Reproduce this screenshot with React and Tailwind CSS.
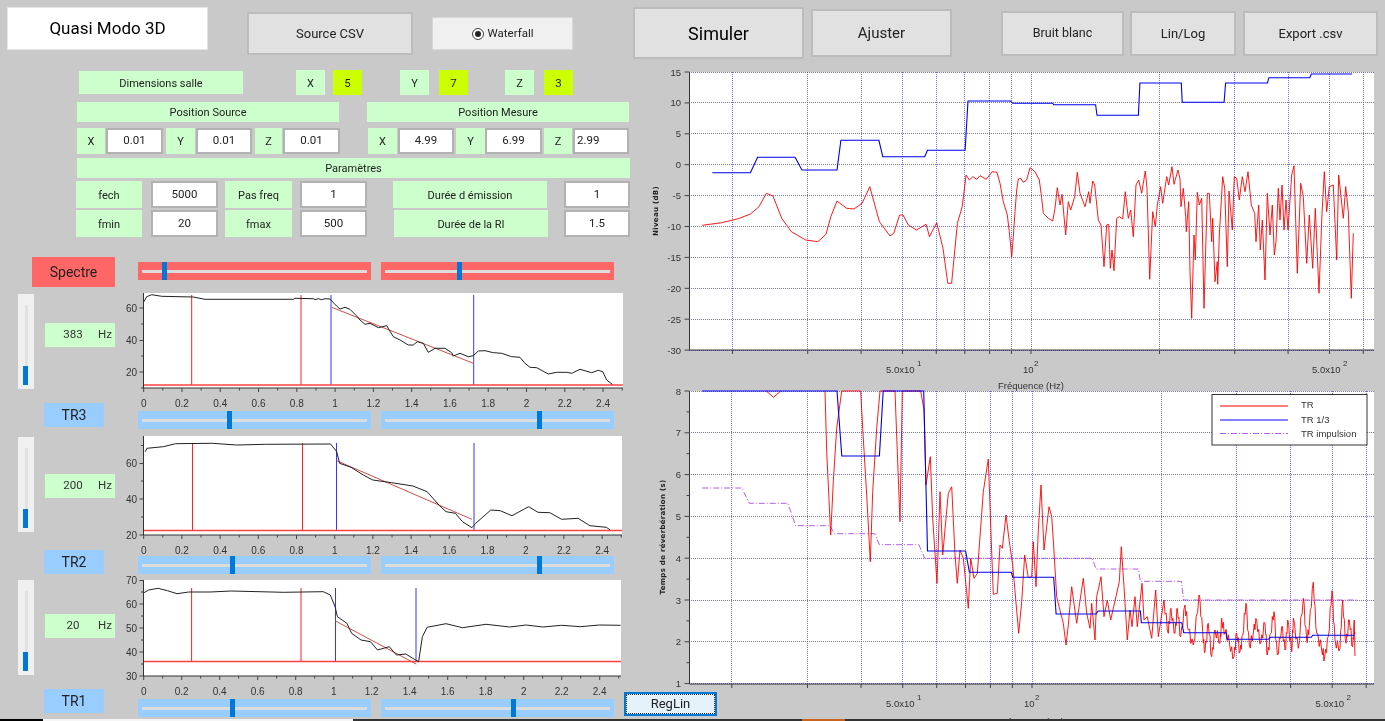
import React from "react";

const FONT = 'Roboto,"Noto Sans","Liberation Sans",sans-serif';
const PLOT_FONT = '"Liberation Sans",Arial,sans-serif';

/* ---------- curve data (traced, converted to page coordinates) ---------- */
const conv = (pts, fx, fy, ox, oy) => pts.map(([x, y]) => [ox + x / fx, oy + y / fy]);
const toStr = (pts) => pts.map(([x, y]) => `${x.toFixed(1)},${y.toFixed(1)}`).join(" ");

const z4 = (p) => conv(p, 2.077, 3, 630, 0);
const z5 = (p) => conv(p, 2.077, 3, 630, 380);
const z6 = (p) => conv(p, 3, 3, 1000, 155);
const z7 = (p) => conv(p, 3, 3, 1180, 155);
const z8 = (p) => conv(p, 3, 3, 820, 385);
const z9 = (p) => conv(p, 3, 3, 1020, 520);
const z2 = (p) => conv(p, 2.45, 3, 0, 250);
const z3 = (p) => conv(p, 2.119, 3, 0, 480);
const z11 = (p) => conv(p, 3, 3, 130, 290);

/* adds a fixed wiggle between traced points, for the noisy part of the curve */
const densify = (pts, amp) => {
  const out = [];
  const w = [1, -0.6, 0.8, -1, 0.5, -0.8, 1, -0.4];
  pts.forEach((p, i) => {
    out.push(p);
    const n = pts[i + 1];
    if (n) {
      [0.25, 0.5, 0.75].forEach((t, j) => {
        out.push([p[0] + (n[0] - p[0]) * t, p[1] + (n[1] - p[1]) * t + amp * w[(i * 3 + j) % 8]]);
      });
    }
  });
  return out;
};

const topBlue = z4([[171,518],[250,518],[265,472],[343,472],[357,510],[430,510],[438,421],[517,421],[525,470],[612,470],[618,451],[696,451],[702,303],[790,303],[795,310],[878,310],[880,314],[967,314],[970,346],[1056,346],[1059,249],[1145,249],[1147,307],[1234,307],[1237,249],[1324,249],[1327,233],[1412,233],[1415,222],[1500,222]]);
const topRed = [
  ...z4([[150,676],[190,668],[225,656],[250,642],[268,620],[283,580],[297,588],[315,655],[335,695],[365,720],[390,725],[407,703],[417,650],[430,603],[450,625],[465,627],[482,610],[498,560],[518,665],[540,708],[548,700],[560,645],[567,645],[578,675],[595,690],[615,673],[622,710],[637,668],[650,745],[660,850],[668,850],[680,670],[690,620],[698,525],[705,540],[712,530],[720,538],[727,527],[740,538],[752,515],[762,517]]),
  ...z6([[0,85],[10,140],[22,180],[28,230],[35,305],[40,245],[45,170],[50,105],[55,72],[62,70],[70,82],[80,75],[90,38],[105,50],[118,75],[125,130],[130,175],[145,190],[158,198],[165,160],[172,98],[180,150],[186,118],[197,240],[205,140],[212,165],[224,125],[232,52],[240,115],[255,155],[266,110],[270,145],[278,78],[284,90],[295,195],[303,210],[312,335],[320,210],[326,208],[331,340],[336,285],[342,347],[350,190],[358,185],[368,192],[376,110],[385,190],[392,165],[400,245],[408,90],[416,75],[425,115],[436,48],[441,100],[449,373],[458,170],[466,215],[472,150],[482,95],[488,145],[500,65],[506,90],[516,35],[522,88],[534,45]]),
  ...z7([[0,72],[3,155],[10,100],[17,185],[19,230],[26,140],[30,350],[35,490],[42,240],[46,315],[52,112],[58,150],[65,130],[72,460],[82,115],[88,115],[95,260],[98,190],[105,380],[112,320],[113,388],[118,240],[128,65],[134,100],[142,335],[147,108],[157,225],[163,65],[170,70],[178,135],[187,65],[195,110],[204,50],[214,150],[224,175],[228,260],[236,150],[241,285],[247,195],[255,375],[262,115],[270,240],[277,150],[283,300],[288,260],[295,100],[300,195],[306,90],[312,225],[318,135],[324,225],[330,135],[335,60],[342,32],[352,355],[362,85],[370,125],[380,325],[388,180],[398,340],[406,160],[417,415],[426,175],[433,50],[440,170],[448,95],[460,90],[470,315],[476,60],[490,190],[497,95],[505,170],[514,430],[520,235]]),
];

const botBlue = z5([[150,33],[430,33],[440,228],[518,228],[526,33],[610,33],[618,513],[697,513],[705,577],[792,577],[795,592],[880,592],[885,702],[968,702],[972,693],[1060,693],[1062,728],[1146,728],[1150,758],[1238,758],[1240,778],[1326,778],[1330,772],[1415,772],[1418,766],[1505,766]]);
const botPurple = z5([[150,324],[232,324],[248,370],[328,370],[344,437],[415,437],[425,461],[508,461],[518,494],[600,494],[612,535],[960,535],[968,567],[1056,567],[1060,604],[1145,604],[1150,660],[1510,660]]);
const botRedV = z5([[283,33],[298,52],[313,33]]);
const botRed = [
  ...z8([[15,18],[20,200],[32,450],[40,290],[50,130],[65,18],[122,18],[128,130],[140,330],[151,530],[158,320],[170,130],[180,18],[225,18],[232,200],[240,410],[247,18],[302,18],[312,75],[318,300],[331,215],[338,400],[351,595],[360,320],[368,510],[378,400],[385,325],[395,305],[405,510],[412,595],[420,495],[430,520],[445,670],[452,520],[462,580],[472,565],[490,320],[505,222],[514,470],[520,628],[532,625],[540,480],[547,490],[558,390],[568,470],[578,540],[596,745],[605,650],[614,510],[625,578],[635,575],[640,470],[648,605],[655,435]]),
  ...z9([[63,-105],[72,90],[87,-40],[95,-10],[100,60],[110,230],[122,280],[130,310],[138,375],[145,315],[155,200],[170,310],[190,175],[200,280],[210,325],[215,250],[225,360],[230,230],[243,170],[252,290],[262,240],[272,300],[298,185],[304,80],[312,200],[322,360],[330,270],[336,320],[345,230],[352,320],[366,190],[372,300],[382,290],[395,355],[407,210],[415,350]]),
  ...densify(z9([[432,240],[445,340],[453,265],[465,340],[472,265],[482,350],[495,255],[505,330],[520,375],[537,225],[548,335],[555,395],[565,310],[575,410],[585,330],[600,370],[605,295],[615,340],[628,365],[642,410],[650,340],[660,395],[668,345],[678,250],[688,375],[700,340],[710,300],[722,370],[735,310],[742,405],[752,340],[762,275],[772,405],[785,320],[795,390],[803,300],[815,395],[820,295],[835,385],[850,235],[860,360],[868,320],[880,187],[890,340],[905,390],[914,410],[925,350],[936,212],[945,360],[960,385],[968,240],[978,370],[988,300],[998,380],[1003,300],[1005,408]]), 6),
];

const ch1 = {
  curve: z11([[42,35],[50,20],[65,14],[95,19],[190,21],[225,28],[490,28],[495,25],[550,26],[555,29],[565,26],[575,29],[585,26],[600,27],[612,40],[622,50],[630,57],[645,52],[660,58],[680,78],[690,90],[705,103],[720,100],[745,113],[770,107],[790,140],[810,150],[835,165],[850,165],[862,155],[880,160],[895,187],[915,175],[945,175],[965,188],[970,198],[990,190],[1015,200],[1030,197],[1045,183],[1065,182],[1090,188],[1115,190],[1145,200],[1170,202],[1185,220],[1200,232],[1220,233],[1255,252],[1280,247],[1310,247],[1325,250],[1350,238],[1385,248],[1405,241],[1418,245],[1430,270],[1447,283]]),
  reg: z11([[605,52],[1030,220]]),
};
const ch2 = {
  curve: [
    ...z2([[356,605],[360,595],[400,590],[430,581],[520,580],[580,585],[650,583],[810,582],[825,605],[832,640],[860,652],[890,675]]),
    ...z3([[790,0],[830,8],[875,18],[905,35],[930,75],[945,95],[965,100],[980,125],[1000,143],[1008,130],[1040,90],[1060,92],[1085,107],[1120,80],[1140,97],[1165,98],[1190,118],[1225,115],[1250,137],[1285,142],[1293,150]]),
  ],
  reg: [...z2([[825,632]]), ...z3([[1000,118]])],
};
const ch3 = {
  curve: z3([[305,338],[315,330],[335,325],[355,332],[375,341],[400,336],[445,336],[490,333],[600,337],[685,335],[700,345],[710,380],[715,410],[735,430],[745,460],[765,480],[785,485],[800,510],[825,500],[840,525],[860,522],[878,538],[887,545],[895,470],[905,442],[945,431],[980,443],[1030,433],[1080,441],[1115,435],[1150,441],[1190,436],[1230,440],[1270,435],[1315,436]]),
  reg: z3([[711,423],[882,552]]),
};

/* ---------- small pieces ---------- */
const Cell = ({ c, children }) => (
  <div className={"flex shrink-0 items-center justify-center whitespace-nowrap text-[#222] " + c}>{children}</div>
);
const Green = ({ c, children }) => <Cell c={"bg-[#ccffcc] pt-[3px] text-[11px] " + c}>{children}</Cell>;
const Field = ({ c, children }) => (
  <Cell c={"border-2 border-[#b2b2b2] bg-white text-[11.5px] " + c}>{children}</Cell>
);
const Btn = ({ c, children }) => (
  <Cell c={"border-2 border-[#bcbcbc] bg-[#e1e1e1] " + c}>{children}</Cell>
);

const HSlider = ({ c, thumb }) => (
  <div className={"relative flex h-[18px] w-[233px] shrink-0 items-center px-[4px] " + c}>
    <div className="h-[3px] w-full bg-[#dcdcdc]" />
    <div className={"absolute top-0 h-full w-[5px] bg-[#0078d7] " + thumb} />
  </div>
);

const VSlider = ({ c }) => (
  <div className={"relative flex h-[95px] w-[16px] shrink-0 justify-center bg-[#f0f0f0] pt-[11px] " + c}>
    <div className="h-[79px] w-[3px] bg-[#e2e2e2]" />
    <div className="absolute left-[5px] top-[72px] h-[19px] w-[5px] bg-[#0078d7]" />
  </div>
);

const XLABELS = ["0", "0.2", "0.4", "0.6", "0.8", "1", "1.2", "1.4", "1.6", "1.8", "2", "2.2", "2.4"];

const SmallPlot = ({ top, bottom, right, scale, yTicks, minors, data, red, blue, vTop, hline, h }) => {
  const x = (v) => 143.7 + v * scale;
  const ticks = Array.from({ length: 26 }, (_, i) => i / 10);
  return (
    <svg
      className="shrink-0 overflow-visible"
      width="509"
      height={h}
      viewBox={`115 ${top} 509 ${h}`}
      fontFamily={PLOT_FONT}
    >
      <rect x="144" y={top} width={right - 144} height={bottom - top} fill="#fff" />
      <polyline points={`143.5,${top} 143.5,${bottom} ${right},${bottom}`} fill="none" stroke="#333" strokeWidth="1" />
      {ticks.map((t, i) => (
        <line key={i} x1={x(t)} x2={x(t)} y1={bottom} y2={bottom + (i % 2 ? 2.5 : 4)} stroke="#444" strokeWidth="1" />
      ))}
      {XLABELS.map((l, i) => (
        <text key={l} x={x(i * 0.2)} y={bottom + 18.5} fontSize="10" fill="#333" textAnchor="middle">{l}</text>
      ))}
      {yTicks.map(([label, y]) => (
        <g key={label}>
          <line x1="139.5" x2="143.5" y1={y} y2={y} stroke="#444" />
          <text x="137" y={y + 3.5} fontSize="10" fill="#333" textAnchor="end">{label}</text>
        </g>
      ))}
      {minors.map((y) => (
        <line key={y} x1="141" x2="143.5" y1={y} y2={y} stroke="#444" />
      ))}
      {red.map((v) => (
        <line key={v} x1={v} x2={v} y1={vTop} y2={hline} stroke="#ff2020" strokeWidth="1" />
      ))}
      {blue.map((v) => (
        <line key={v} x1={v} x2={v} y1={vTop} y2={hline} stroke="#3535ff" strokeWidth="1" />
      ))}
      <line x1="144" x2={right} y1={hline} y2={hline} stroke="#ff4040" strokeWidth="1.3" />
      <polyline points={toStr(data.reg)} fill="none" stroke="#c8504a" strokeWidth="1" />
      <polyline points={toStr(data.curve)} fill="none" stroke="#222" strokeWidth="1" strokeLinejoin="round" />
    </svg>
  );
};

const Freq = [20, 30, 40, 50, 60, 70, 80, 90, 100, 200, 300, 400, 500, 600];
const snap = (v) => Math.floor(v) + 0.5;

const Grid = ({ fx, ys, top, bottom }) => (
  <g stroke="#4040ff" strokeOpacity="0.75" strokeWidth="1" strokeDasharray="1 1">
    {Freq.map((f) => (
      <line key={f} x1={snap(fx(f))} x2={snap(fx(f))} y1={top} y2={bottom} />
    ))}
    {ys.map(([, y]) => (
      <line key={y} x1="689" x2="1374" y1={snap(y)} y2={snap(y)} />
    ))}
  </g>
);

const AxisFrame = ({ fx, ys, bottom, top, labels, minors }) => (
  <g fontFamily={PLOT_FONT} fontSize="9.5" fill="#333">
    <polyline points={`689.5,${top} 689.5,${bottom} 1374,${bottom}`} fill="none" stroke="#333" strokeWidth="1" />
    {Freq.map((f) => (
      <line key={f} x1={fx(f)} x2={fx(f)} y1={bottom} y2={bottom + 4} stroke="#444" />
    ))}
    {ys.map(([l, y]) => (
      <g key={l}>
        <line x1="684.5" x2="689.5" y1={y} y2={y} stroke="#444" />
        <text x="681" y={y + 3.5} textAnchor="end">{l}</text>
      </g>
    ))}
    {(minors || []).map((y) => (
      <line key={y} x1="686.5" x2="689.5" y1={y} y2={y} stroke="#444" />
    ))}
    {labels.map(([x, base, sup]) => (
      <g key={base + sup + x}>
        <text x={x} y={bottom + 22.5}>{base}</text>
        <text x={x + (base.length > 2 ? 31 : 11)} y={bottom + 16} fontSize="8">{sup}</text>
      </g>
    ))}
  </g>
);

const topX = (f) => 1031 + 427 * Math.log10(f / 100);
const botX = (f) => 1032 + 429.5 * Math.log10(f / 100);
const topYs = [15, 10, 5, 0, -5, -10, -15, -20, -25, -30].map((v, i) => [String(v), 72 + i * 30.9]);
const botYs = [8, 7, 6, 5, 4, 3, 2, 1].map((v, i) => [String(v), 391 + i * 41.8]);
const botMinors = [0, 1, 2, 3, 4, 5, 6].map((i) => 391 + (i + 0.5) * 41.8);

const TopChart = () => (
  <svg className="block shrink-0 overflow-visible" width="761" height="322" viewBox="624 65 761 322">
    <rect x="689" y="72" width="685" height="278" fill="#fff" />
    <Grid fx={topX} ys={topYs} top={72} bottom={350} />
    <polyline points={toStr(topRed)} fill="none" stroke="#ff0000" strokeWidth="0.9" strokeLinejoin="round" />
    <polyline points={toStr(topBlue)} fill="none" stroke="#0000ee" strokeWidth="1.1" />
    <AxisFrame
      fx={topX}
      ys={topYs}
      top={72}
      bottom={350}
      labels={[[886, "5.0x10", "1"], [1023, "10", "2"], [1312, "5.0x10", "2"]]}
    />
    <text
      transform="translate(658 211) rotate(-90)"
      textAnchor="middle"
      fontFamily="'DejaVu Sans',sans-serif"
      fontWeight="700"
      fontSize="7"
      letterSpacing="0.3"
      fill="#222"
    >
      Niveau (dB)
    </text>
    <text x="1031" y="389" textAnchor="middle" fontFamily={PLOT_FONT} fontSize="9.5" fill="#333">Fréquence (Hz)</text>
  </svg>
);

const BottomChart = () => (
  <svg className="block shrink-0" width="761" height="334" viewBox="624 387 761 334">
    <rect x="689" y="391" width="685" height="293" fill="#fff" />
    <Grid fx={botX} ys={botYs} top={391} bottom={684} />
    <polyline points={toStr(botPurple)} fill="none" stroke="#b45cf0" strokeWidth="1" strokeDasharray="6 2 1 2" />
    <polyline points={toStr(botRedV)} fill="none" stroke="#ff0000" strokeWidth="0.9" />
    <polyline points={toStr(botRed)} fill="none" stroke="#ff0000" strokeWidth="0.9" strokeLinejoin="round" />
    <polyline points={toStr(botBlue)} fill="none" stroke="#0000ee" strokeWidth="1.1" />
    <AxisFrame
      fx={botX}
      ys={botYs}
      top={391}
      bottom={684}
      minors={botMinors}
      labels={[[886, "5.0x10", "1"], [1024, "10", "2"], [1315.5, "5.0x10", "2"]]}
    />
    <text
      transform="translate(665 537) rotate(-90)"
      textAnchor="middle"
      fontFamily="'DejaVu Sans',sans-serif"
      fontWeight="700"
      fontSize="7"
      letterSpacing="0.3"
      fill="#222"
    >
      Temps de réverbération (s)
    </text>
    <text x="1031" y="725" textAnchor="middle" fontFamily={PLOT_FONT} fontSize="9.5" fill="#333">Fréquence (Hz)</text>
    <g fontFamily={PLOT_FONT} fontSize="9.5" fill="#333">
      <rect x="1212" y="394.5" width="155" height="50.5" fill="#fff" stroke="#333" strokeWidth="1" />
      <line x1="1220" x2="1288" y1="406" y2="406" stroke="#ff0000" strokeWidth="1.1" />
      <line x1="1220" x2="1288" y1="420" y2="420" stroke="#5a5aff" strokeWidth="1.6" />
      <line x1="1220" x2="1288" y1="433.5" y2="433.5" stroke="#b45cf0" strokeWidth="1" strokeDasharray="6 2 1 2" />
      <text x="1301" y="408">TR</text>
      <text x="1301" y="422.5">TR 1/3</text>
      <text x="1301" y="437">TR impulsion</text>
    </g>
  </svg>
);

const HzLabel = ({ c, value }) => (
  <div className={"flex h-[24px] w-[70px] shrink-0 items-center bg-[#ccffcc] pl-[10px] text-[11.5px] text-[#333] " + c}>
    <span className="w-[36px] text-center">{value}</span>
    <span className="ml-[7px]">Hz</span>
  </div>
);

const Blue = ({ children }) => (
  <Cell c="h-[24px] w-[60px] bg-[#99ccff] text-[14px] ml-[44px]">{children}</Cell>
);

export default function App() {
  return (
    <div
      className="relative flex h-[721px] w-[1385px] flex-col overflow-hidden bg-[#c9c9c9] blur-[0.45px]"
      style={{ fontFamily: FONT }}
    >
      {/* top buttons */}
      <div className="flex h-[65px] shrink-0 items-start">
        <Cell c="ml-[7px] mt-[7px] h-[43px] w-[201px] border border-[#e4e4e4] bg-white text-[17px] text-black">Quasi Modo 3D</Cell>
        <Btn c="ml-[39px] mt-[12px] h-[43px] w-[166px] text-[13px]">Source CSV</Btn>
        <Cell c="ml-[19px] mt-[17px] h-[33px] w-[141px] gap-[4px] border border-[#d8d8d8] bg-[#f0f0f0] text-[11.5px]">
          <span className="flex h-[12px] w-[12px] items-center justify-center rounded-full border border-[#444] bg-white">
            <span className="h-[6px] w-[6px] rounded-full bg-[#222]" />
          </span>
          Waterfall
        </Cell>
        <Btn c="ml-[60px] mt-[7px] h-[52px] w-[171px] text-[18px] text-black">Simuler</Btn>
        <Btn c="ml-[7px] mt-[9px] h-[48px] w-[141px] text-[15px]">Ajuster</Btn>
        <Btn c="ml-[49px] mt-[11px] h-[45px] w-[123px] text-[12.5px]">Bruit blanc</Btn>
        <Btn c="ml-[6px] mt-[11px] h-[45px] w-[106px] text-[13px]">Lin/Log</Btn>
        <Btn c="ml-[7px] mt-[11px] h-[45px] w-[135px] text-[13px]">Export .csv</Btn>
      </div>

      <div className="flex min-h-0 flex-1">
        {/* left column */}
        <div className="flex w-[624px] shrink-0 flex-col">
          <div className="mt-[5px] flex h-[25px] items-center">
            <Green c="ml-[79px] h-[23px] w-[164px] text-[10.5px]">Dimensions salle</Green>
            <Green c="ml-[53px] h-[25px] w-[29px]">X</Green>
            <Cell c="ml-[8px] h-[25px] w-[29px] bg-[#ccff00] pt-[3px] text-[11.5px]">5</Cell>
            <Green c="ml-[38px] h-[25px] w-[29px]">Y</Green>
            <Cell c="ml-[10px] h-[25px] w-[29px] bg-[#ccff00] pt-[3px] text-[11.5px]">7</Cell>
            <Green c="ml-[37px] h-[25px] w-[29px]">Z</Green>
            <Cell c="ml-[10px] h-[25px] w-[29px] bg-[#ccff00] pt-[3px] text-[11.5px]">3</Cell>
          </div>

          <div className="mt-[7px] flex h-[20px]">
            <Green c="ml-[77px] w-[262px]">Position Source</Green>
            <Green c="ml-[28px] w-[262px]">Position Mesure</Green>
          </div>

          <div className="mt-[6px] flex h-[26px]">
            <Green c="ml-[77px] w-[28px]">X</Green>
            <Field c="ml-[1px] w-[57px]">0.01</Field>
            <Green c="ml-[3px] w-[29px]">Y</Green>
            <Field c="ml-[1px] w-[56px]">0.01</Field>
            <Green c="ml-[3px] w-[27px]">Z</Green>
            <Field c="ml-[1px] w-[57px]">0.01</Field>
            <Green c="ml-[28px] w-[29px]">X</Green>
            <Field c="ml-[1px] w-[56px]">4.99</Field>
            <Green c="ml-[2px] w-[29px]">Y</Green>
            <Field c="ml-[0px] w-[57px]">6.99</Field>
            <Green c="ml-[2px] w-[28px]">Z</Green>
            <Field c="ml-[1px] w-[56px] justify-start pl-[2px]">2.99</Field>
          </div>

          <div className="mt-[4px] flex h-[20px]">
            <Green c="ml-[77px] w-[553px]">Paramètres</Green>
          </div>

          <div className="mt-[3px] flex h-[27px]">
            <Green c="ml-[76px] w-[66px]">fech</Green>
            <Field c="ml-[9px] w-[67px]">5000</Field>
            <Green c="ml-[7px] w-[67px]">Pas freq</Green>
            <Field c="ml-[8px] w-[67px]">1</Field>
            <Green c="ml-[26px] w-[154px]">Durée d émission</Green>
            <Field c="ml-[17px] w-[66px]">1</Field>
          </div>

          <div className="mt-[2px] flex h-[27px]">
            <Green c="ml-[76px] w-[66px]">fmin</Green>
            <Field c="ml-[9px] w-[67px]">20</Field>
            <Green c="ml-[7px] w-[67px]">fmax</Green>
            <Field c="ml-[8px] w-[67px]">500</Field>
            <Green c="ml-[27px] w-[154px]">Durée de la RI</Green>
            <Field c="ml-[16px] w-[66px]">1.5</Field>
          </div>

          {/* Spectre */}
          <div className="mt-[20px] flex h-[30px] items-start">
            <Cell c="ml-[32px] h-[30px] w-[83px] bg-[#ff6666] text-[14px]">Spectre</Cell>
            <HSlider c="ml-[23px] mt-[5px] bg-[#ff6666]" thumb="left-[24px]" />
            <HSlider c="ml-[10px] mt-[5px] bg-[#ff6666]" thumb="left-[76px]" />
          </div>

          {/* channel 3 */}
          <div className="mt-[6px] flex h-[110px] items-start">
            <VSlider c="ml-[18px] mt-[1px]" />
            <HzLabel c="ml-[11px] mt-[30px]" value="383" />
            <SmallPlot
              h={110}
              top={293}
              bottom={388}
              right={623}
              scale={191.4}
              yTicks={[["60", 308], ["40", 340.5], ["20", 372]]}
              minors={[324, 356, 388]}
              data={ch1}
              red={[191.7, 301]}
              blue={[331, 473.7]}
              vTop={295}
              hline={385}
            />
          </div>
          <div className="flex h-[33px] items-start">
            <Blue>TR3</Blue>
            <HSlider c="ml-[34px] mt-[8px] bg-[#99ccff]" thumb="left-[89px]" />
            <HSlider c="ml-[10px] mt-[8px] bg-[#99ccff]" thumb="left-[156px]" />
          </div>

          {/* channel 2 */}
          <div className="flex h-[114px] items-start">
            <VSlider c="ml-[18px] mt-[1px]" />
            <HzLabel c="ml-[11px] mt-[38px]" value="200" />
            <SmallPlot
              h={114}
              top={436}
              bottom={535}
              right={622}
              scale={191}
              yTicks={[["60", 463.5], ["40", 499], ["20", 535]]}
              minors={[445.5, 481, 517]}
              data={ch2}
              red={[192.5, 302.5]}
              blue={[336.5, 474]}
              vTop={443}
              hline={530.5}
            />
          </div>
          <div className="flex h-[30px] items-start">
            <Blue>TR2</Blue>
            <HSlider c="ml-[34px] mt-[6px] bg-[#99ccff]" thumb="left-[92px]" />
            <HSlider c="ml-[10px] mt-[6px] bg-[#99ccff]" thumb="left-[156px]" />
          </div>

          {/* channel 1 */}
          <div className="flex h-[109px] items-start">
            <VSlider c="ml-[18px]" />
            <HzLabel c="ml-[11px] mt-[34px]" value="20" />
            <SmallPlot
              h={109}
              top={580}
              bottom={676}
              right={621}
              scale={190}
              yTicks={[["70", 580.5], ["60", 604], ["50", 628], ["40", 652], ["30", 676]]}
              minors={[592, 616, 640, 664]}
              data={ch3}
              red={[191.6, 301]}
              blue={[335.5, 416]}
              vTop={588}
              hline={661.5}
            />
          </div>
          <div className="flex h-[30px] items-start">
            <Blue>TR1</Blue>
            <HSlider c="ml-[34px] mt-[10px] bg-[#99ccff]" thumb="left-[92px]" />
            <HSlider c="ml-[10px] mt-[10px] bg-[#99ccff]" thumb="left-[130px]" />
            <Cell c="relative z-10 ml-[10px] mt-[3px] h-[24px] w-[93px] border-2 border-[#0078d7] bg-[#e5f1fb] text-[13px] outline-1 -outline-offset-3 outline-dotted outline-[#333]">RegLin</Cell>
          </div>
        </div>

        {/* right column */}
        <div className="flex min-w-0 flex-1 flex-col">
          <TopChart />
          <BottomChart />
        </div>
      </div>

      {/* window edge */}
      <div className="absolute bottom-0 left-0 flex h-[2px] w-full bg-[#333]">
        <div className="w-[43px] bg-black" />
        <div className="w-[310px] bg-[#f5f5f5]" />
        <div className="ml-[449px] w-[43px] bg-[#c8641e]" />
      </div>
    </div>
  );
}
